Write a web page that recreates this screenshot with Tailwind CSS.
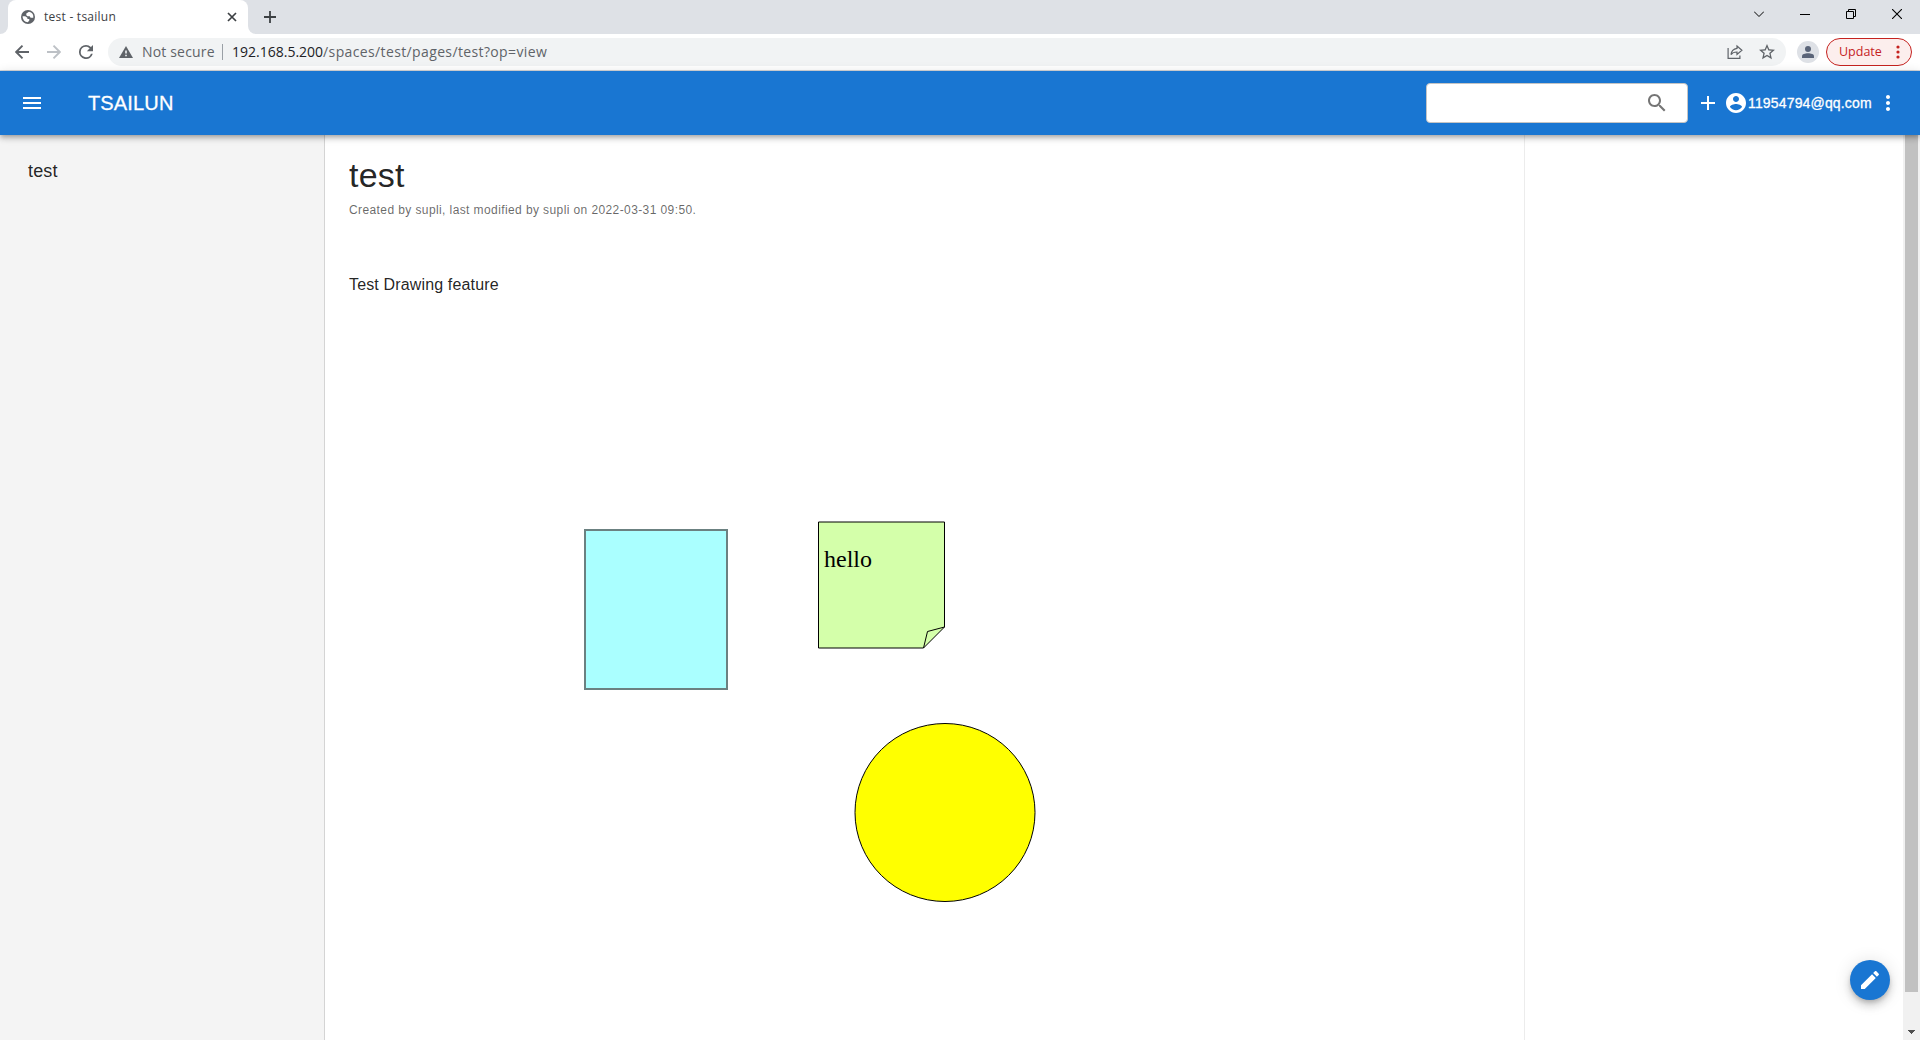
<!DOCTYPE html>
<html lang="en">
<head>
    <meta charset="UTF-8">
    <meta name="viewport" content="width=device-width, initial-scale=1.0">
    <title>test - tsailun</title>
    <script src="https://cdn.jsdelivr.net/npm/@tailwindcss/browser@4"></script>
</head>
<body class="flex h-screen flex-col overflow-hidden bg-white font-['Liberation_Sans',sans-serif] text-black/87">

    <!-- Tab strip -->
    <div class="flex h-[34px] shrink-0 bg-[#dee1e6] font-['Open_Sans',sans-serif] text-[#3c4043]">
        <div class="flex w-2 items-end bg-white"><div class="h-full w-2 rounded-br-lg bg-[#dee1e6]"></div></div>
        <div class="flex w-[240px] items-center rounded-t-lg bg-white pl-[13px] pr-[11px]">
            <svg class="size-[14px]" viewBox="0 0 14 14">
                <circle cx="7" cy="7" r="7" fill="#5f6368"/>
                <path d="M8 1.800 5.300 3.600v1.600L6.500 6.200h2.200l.9 1.600h2.700A5.500 5.500 0 0 0 8 1.800ZM1.600 6.300h2.600l2.200 1.500v1.300h1.900v1.300l-1.500 1.900A5.500 5.500 0 0 1 1.600 6.300Z" fill="#fff"/>
            </svg>
            <span class="ml-[9px] flex-1 text-[12px] tracking-[0.25px]">test - tsailun</span>
            <svg class="size-[10px]" viewBox="0 0 10 10" stroke="#3c4043" stroke-width="1.7"><path d="M1 1l8 8M9 1 1 9"/></svg>
        </div>
        <div class="w-2 bg-white"><div class="h-full w-2 rounded-bl-lg bg-[#dee1e6]"></div></div>
        <svg class="ml-2 mt-[11px] size-3" viewBox="0 0 12 12" stroke="#3c4043" stroke-width="1.8"><path d="M6 0v12M0 6h12"/></svg>
        <div class="ml-auto flex gap-[36px] pr-[18px] pt-[9px] text-black">
            <svg class="size-[10px]" viewBox="0 0 10 10" fill="none" stroke="currentColor" stroke-width="1"><path d="M0 2.500l5 5 5-5"/></svg>
            <svg class="size-[10px]" viewBox="0 0 10 10" fill="none" stroke="currentColor"><path d="M0 5.500h10"/></svg>
            <svg class="size-[10px]" viewBox="0 0 10 10" fill="none" stroke="currentColor"><path d="M.5 2.500h7v7h-7zM2.500 2.500v-2h7v7h-2"/></svg>
            <svg class="size-[10px]" viewBox="0 0 10 10" fill="none" stroke="currentColor" stroke-width="1.1"><path d="M0 0l10 10M10 0 0 10"/></svg>
        </div>
    </div>

    <!-- Address bar -->
    <div class="flex h-[37px] shrink-0 items-center border-b border-[#d5d7da] bg-white font-['Open_Sans',sans-serif] text-[14px] text-[#5f6368]">
        <svg class="ml-[15px] size-[14px]" viewBox="0 0 14 14" fill="none" stroke="currentColor" stroke-width="1.9"><path d="M14 7H1.500M7.500.7 1.200 7l6.300 6.300"/></svg>
        <svg class="ml-[18px] size-[14px] text-[#bdc1c6]" viewBox="0 0 14 14" fill="none" stroke="currentColor" stroke-width="1.9"><path d="M0 7h12.500M6.500.7 12.800 7l-6.300 6.300"/></svg>
        <svg class="ml-[18px] size-[14px]" viewBox="4 4 16 16" fill="currentColor"><path d="M17.650 6.350A7.960 7.960 0 0 0 12 4a8 8 0 1 0 7.730 10h-2.080A6 6 0 1 1 12 6c1.660 0 3.140.69 4.220 1.780L13 11h7V4z"/></svg>
        <div class="ml-[15px] flex h-7 w-[1678px] items-center rounded-full bg-[#f1f3f4] pl-[11px] pr-[11px]">
            <svg class="h-3 w-[14px]" viewBox="0 0 14 12"><path d="M7 0l7 12H0z" fill="currentColor"/><path d="M6.200 4.500h1.600v3H6.200zM6.200 8.800h1.600v1.500H6.200z" fill="#f1f3f4"/></svg>
            <span class="ml-[9px] w-[73px] whitespace-nowrap pb-px tracking-[0.17px]">Not secure</span>
            <span class="ml-[7px] h-4 w-px bg-[#9aa0a6]"></span>
            <span class="ml-[9px] flex-1 whitespace-nowrap pb-px tracking-[0.37px]"><span class="tracking-normal text-[#202124]">192.168.5.200</span>/spaces/test/pages/test?op=view</span>
            <svg class="size-4" viewBox="0 0 16 16" fill="none" stroke="currentColor" stroke-width="1.2"><path d="M1.100 4v10.400h11.800v-3M10 2l4.900 4.200-4.900 4.200V8c-2.700 0-4.800.8-6 2.600.3-3.300 2.800-5.700 6-6.200z"/></svg>
            <svg class="ml-4 size-4" viewBox="2 2 20 20" fill="currentColor"><path d="M22 9.240l-7.190-.62L12 2 9.190 8.630 2 9.240l5.460 4.730L5.820 21 12 17.270 18.180 21l-1.630-7.030zM12 15.400l-3.760 2.270 1-4.280-3.320-2.880 4.380-.38L12 6.100l1.710 4.040 4.380.38-3.320 2.880 1 4.280z"/></svg>
        </div>
        <div class="ml-[11px] flex size-[22px] items-center justify-center rounded-full bg-[#dee1e6]">
            <svg class="size-3" viewBox="0 0 12 12" fill="#5a6478"><circle cx="6" cy="3" r="3"/><path d="M0 12V10.200C0 8.200 3 7.300 6 7.300s6 .9 6 2.900V12z"/></svg>
        </div>
        <div class="ml-[7px] flex h-7 w-[86px] items-center rounded-full border border-[#c5221f] bg-[#fceeed] pl-3 text-[12.500px] text-[#c5221f]">
            <span class="flex-1">Update</span>
            <svg class="mr-[11px] h-[14px] w-1" viewBox="0 0 4 14" fill="currentColor"><circle cx="2" cy="2" r="1.600"/><circle cx="2" cy="7" r="1.600"/><circle cx="2" cy="12" r="1.600"/></svg>
        </div>
    </div>

    <!-- App bar -->
    <header class="relative z-10 flex h-16 shrink-0 items-center bg-[#1976d2] pl-5 pr-5 text-white shadow-[0px_2px_4px_-1px_rgba(0,0,0,0.2),0px_4px_5px_0px_rgba(0,0,0,0.14),0px_1px_10px_0px_rgba(0,0,0,0.12)]">
        <svg class="size-6" viewBox="0 0 24 24" fill="currentColor"><path d="M3 18h18v-2H3v2zm0-5h18v-2H3v2zm0-7v2h18V6H3z"/></svg>
        <h1 class="ml-11 flex-1 text-xl tracking-[0.15px] [-webkit-text-stroke:0.3px_white]">TSAILUN</h1>
        <div class="flex h-10 w-[262px] items-center justify-end rounded border border-[#c4c4c4] bg-white pr-[18px] text-[#757575]">
            <svg class="size-6" viewBox="0 0 24 24" fill="currentColor"><path d="M15.500 14h-.79l-.28-.27C15.410 12.590 16 11.110 16 9.500 16 5.910 13.090 3 9.500 3S3 5.910 3 9.500 5.910 16 9.500 16c1.610 0 3.090-.59 4.230-1.570l.27.28v.79l5 4.990L20.490 19l-4.990-5zm-6 0C7.010 14 5 11.990 5 9.500S7.010 5 9.500 5 14 7.010 14 9.500 11.990 14 9.500 14z"/></svg>
        </div>
        <svg class="ml-2 size-6" viewBox="0 0 24 24" fill="currentColor"><path d="M19 13h-6v6h-2v-6H5v-2h6V5h2v6h6v2z"/></svg>
        <svg class="ml-1 size-6" viewBox="0 0 24 24" fill="currentColor"><path d="M12 2C6.480 2 2 6.480 2 12s4.480 10 10 10 10-4.480 10-10S17.520 2 12 2zm0 3c1.660 0 3 1.340 3 3s-1.340 3-3 3-3-1.340-3-3 1.340-3 3-3zm0 14.200c-2.500 0-4.710-1.280-6-3.220.03-1.990 4-3.080 6-3.080 1.990 0 5.970 1.090 6 3.080-1.290 1.940-3.500 3.220-6 3.220z"/></svg>
        <span class="w-32 text-sm tracking-[0.16px] [-webkit-text-stroke:0.3px_white]">11954794@qq.com</span>
        <svg class="size-6" viewBox="0 0 24 24" fill="currentColor"><path d="M12 8c1.100 0 2-.9 2-2s-.9-2-2-2-2 .9-2 2 .9 2 2 2zm0 2c-1.100 0-2 .9-2 2s.9 2 2 2 2-.9 2-2-.9-2-2-2zm0 6c-1.100 0-2 .9-2 2s.9 2 2 2 2-.9 2-2-.9-2-2-2z"/></svg>
    </header>

    <div class="flex min-h-0 flex-1">
        <!-- Page tree -->
        <aside class="w-[325px] shrink-0 border-r border-[#d4d4d4] bg-[#f4f4f4] pl-7 pt-[22px]">
            <a class="text-lg tracking-[0.15px]">test</a>
        </aside>

        <main class="w-[1200px] shrink-0 border-r border-[#ececec] pl-6 pt-[19px]">
            <h2 class="text-[34px] leading-[42px] tracking-[0.25px]">test</h2>
            <p class="mt-1 text-xs leading-5 tracking-[0.4px] text-black/60">Created by supli, last modified by supli on 2022-03-31 09:50.</p>
            <p class="mt-[53px] text-base leading-6 tracking-[0.15px]">Test Drawing feature</p>

            <!-- Drawing, viewBox in window coordinates -->
            <svg class="mt-[2px] h-[700px] w-[1150px]" viewBox="349 299 1150 700">
                <rect x="585" y="530" width="142" height="159" fill="#aaffff" stroke="#6b8181" stroke-width="2"/>
                <g stroke="#000">
                    <path d="M818.500 522H944.500V627L923.500 648H818.500z" fill="#d4ffaa"/>
                    <path d="M923.500 648 927.500 631.500 944.500 627" fill="none"/>
                </g>
                <text x="824" y="567" class="font-['Liberation_Serif',serif] text-2xl">hello</text>
                <ellipse cx="945" cy="812.500" rx="90" ry="89" fill="#ffff00" stroke="#000"/>
            </svg>
        </main>

        <!-- Scrollbar -->
        <div class="ml-auto flex w-[17px] flex-col items-center justify-between bg-[#f1f1f1]">
            <div class="h-[857px] w-[13px] bg-[#c1c1c1]"></div>
            <svg class="mb-[6px] h-1 w-[7px]" viewBox="0 0 7 4" fill="#505050" shape-rendering="crispEdges"><path d="M0 0h7v1H6v1H5v1H4v1H3V3H2V2H1V1H0z"/></svg>
        </div>
    </div>

    <button class="fixed bottom-10 right-[30px] z-20 flex size-10 items-center justify-center rounded-full bg-[#1976d2] text-white shadow-[0px_3px_5px_-1px_rgba(0,0,0,0.2),0px_6px_10px_0px_rgba(0,0,0,0.14),0px_1px_18px_0px_rgba(0,0,0,0.12)]">
        <svg class="size-6" viewBox="0 0 24 24" fill="currentColor"><path d="M3 17.250V21h3.750L17.810 9.940l-3.750-3.750L3 17.250zM20.710 7.040c.39-.39.39-1.020 0-1.410l-2.340-2.340c-.39-.39-1.020-.39-1.410 0l-1.830 1.830 3.750 3.750 1.830-1.830z"/></svg>
    </button>
</body>
</html>
